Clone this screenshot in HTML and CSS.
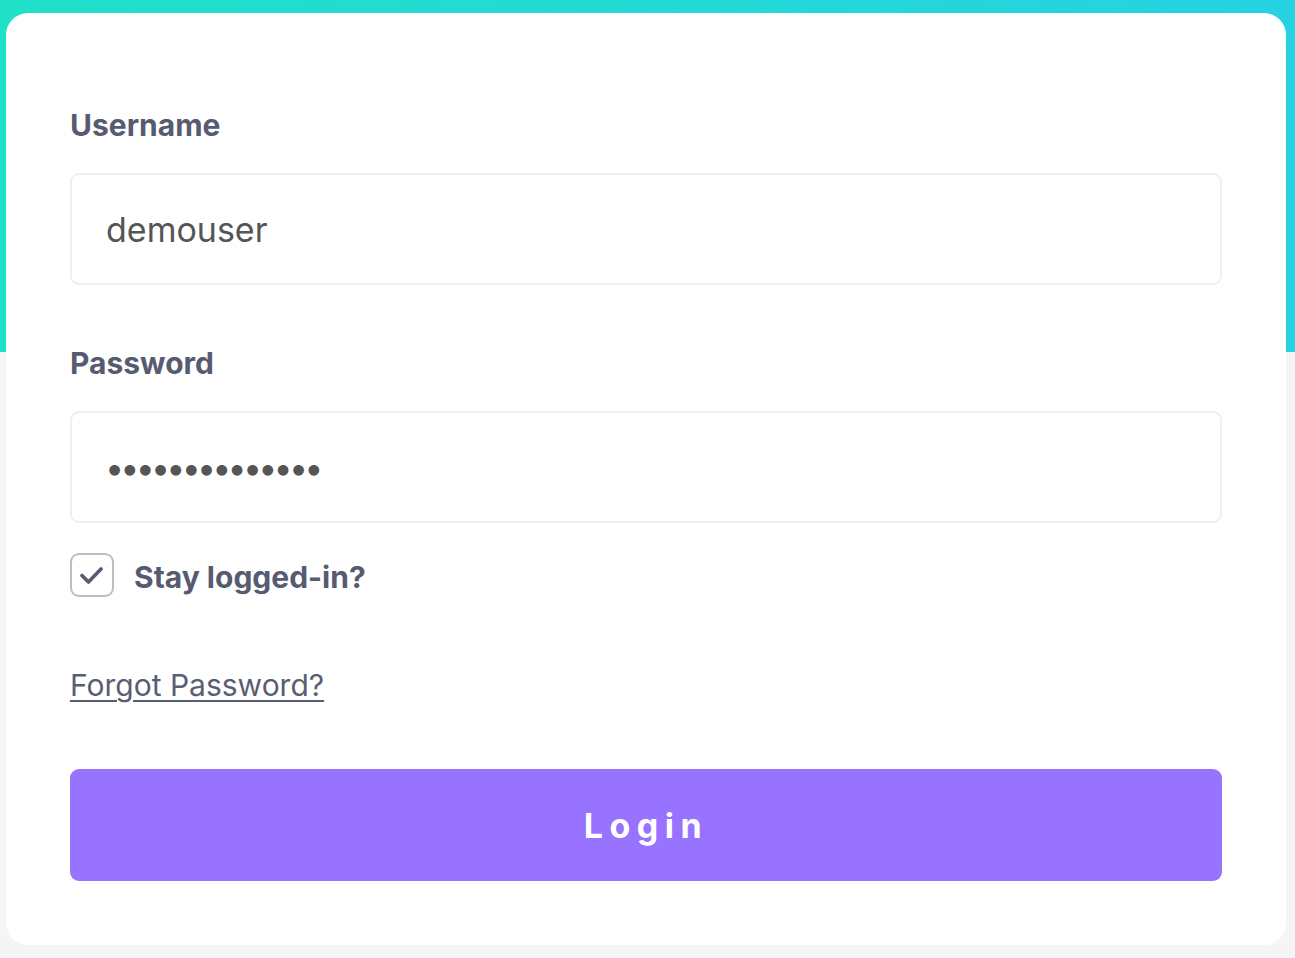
FILE: index.html
```html
<!DOCTYPE html>
<html lang="en">
<head>
<meta charset="utf-8">
<title>Login</title>
<link rel="stylesheet" href="styles.css">
</head>
<body>
<div class="page">
  <form class="card">
    <label class="field-label" for="username">Username</label>
    <input class="field-input" id="username" type="text" value="demouser">
    <label class="field-label label-gap" for="password">Password</label>
    <input class="field-input pass" id="password" type="password" value="demopassword12">
    <div class="stay-row">
      <span class="check-box">
        <svg width="24" height="24" viewBox="0 0 24 24"><path d="M2 12.5l6.5 6.5L21 6" fill="none" stroke="#575b71" stroke-width="3.6" stroke-linecap="round" stroke-linejoin="round"/></svg>
      </span>
      <span class="stay-text">Stay logged-in?</span>
    </div>
    <a class="forgot" href="#">Forgot Password?</a>
    <button class="login-btn" type="button">Login</button>
  </form>
</div>
</body>
</html>
```
FILE: styles.css
```css
html, body {
  margin: 0;
  padding: 0;
}
body {
  background: linear-gradient(to bottom, transparent 352px, #f5f5f5 352px),
              linear-gradient(to right, #20e0c8, #25d2e2);
  background-color: #f5f5f5;
  font-family: Inter, "Noto Sans", sans-serif;
  min-height: 958px;
}
.page {
  padding: 13px 9px 13px 6px;
}
.card {
  background: #fff;
  border-radius: 22px;
  padding: 94px 64px 64px;
  display: flex;
  flex-direction: column;
}
.field-label {
  font-size: 30px;
  line-height: 36px;
  font-weight: 700;
  color: #575b71;
  margin-bottom: 30px;
}
.label-gap {
  margin-top: 60px;
}
.field-input {
  box-sizing: border-box;
  height: 112px;
  width: 100%;
  border: 2px solid #efefef;
  border-radius: 9px;
  padding: 0 34px;
  font-family: Inter, "Noto Sans", sans-serif;
  font-size: 34px;
  color: #555;
  background: #fff;
  outline: none;
}
.field-input.pass {
  font-size: 34px;
  letter-spacing: -3.8px;
  padding-left: 33px;
}
.stay-row {
  display: flex;
  align-items: center;
  gap: 20px;
  margin-top: 30px;
  height: 44px;
}
.check-box {
  box-sizing: border-box;
  width: 44px;
  height: 44px;
  border: 2px solid #bcbcc4;
  border-radius: 9px;
  display: flex;
  align-items: center;
  justify-content: center;
}
.stay-text {
  font-size: 30px;
  font-weight: 700;
  color: #575b71;
  padding-top: 3px;
}
.forgot {
  align-self: flex-start;
  margin-top: 70px;
  font-size: 30px;
  line-height: 36px;
  color: #5a5e72;
  text-decoration: underline;
  text-underline-offset: 4px;
  text-decoration-thickness: 2px;
}
.login-btn {
  margin-top: 66px;
  height: 112px;
  border: none;
  border-radius: 9px;
  background: #9873ff;
  color: #fff;
  font-family: Inter, "Noto Sans", sans-serif;
  font-size: 34px;
  font-weight: 700;
  letter-spacing: 6.5px;
  padding: 0;
}
```
